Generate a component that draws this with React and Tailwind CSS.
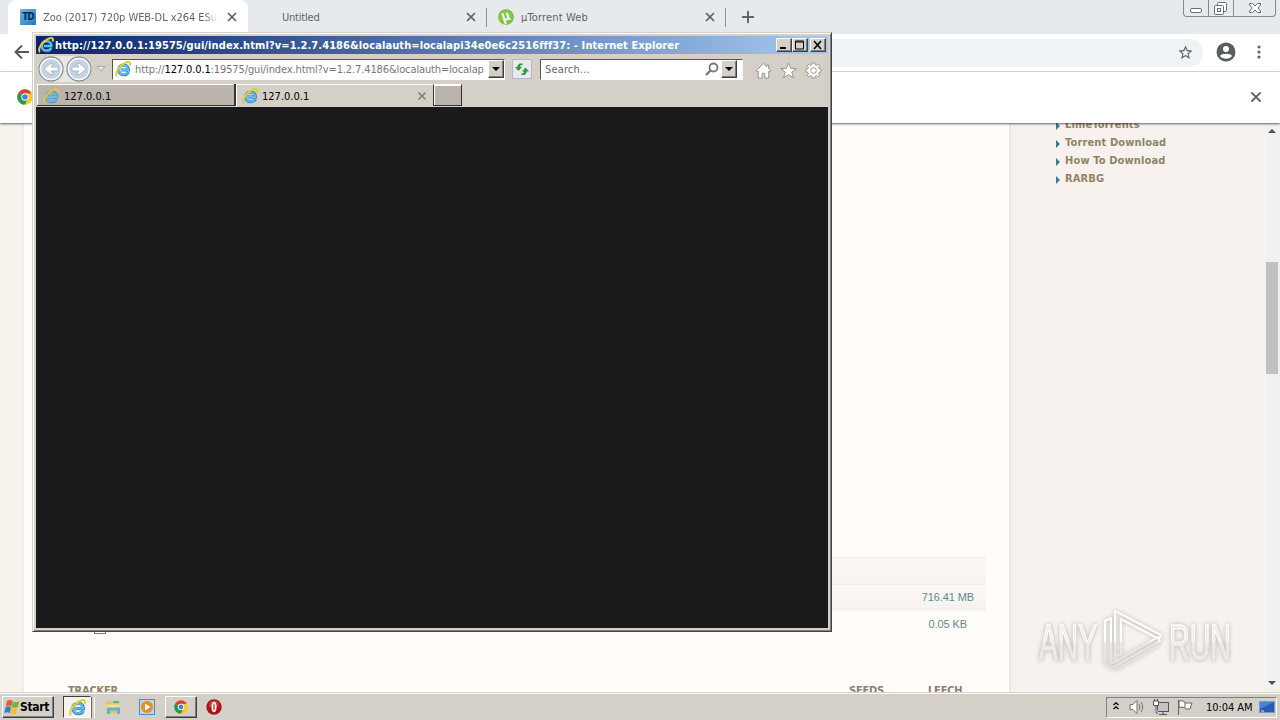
import { X, Plus } from 'lucide-react';
import clsx from 'clsx';

const sidebarLinks = ['LimeTorrents', 'Torrent Download', 'How To Download', 'RARBG'];

function IeLogo({ className }) {
  return (
    <svg viewBox="0 0 16 16" className={clsx('shrink-0', className)}>
      <path d="M13.400 11c-.9 1.800-2.600 2.800-4.700 2.800-3 0-5-2.100-5-4.900S5.700 4 8.700 4c3 0 4.900 2.100 4.800 5.100H6" fill="none" stroke="#2a80c4" strokeWidth="3" />
      <path d="M13.200 10.900c-.8 1.600-2.400 2.600-4.500 2.600-2.800 0-4.700-1.900-4.700-4.600s1.900-4.600 4.700-4.600 4.600 1.900 4.500 4.700H6" fill="none" stroke="#5fbcee" strokeWidth="1.900" />
      <path d="M2 15.100C.2 13.800 1.200 9.800 4.500 6.100 8.100 2.200 12.700.1 14.500 1.400c.8.7.7 1.900.1 3.100" fill="none" stroke="#e8cb2c" strokeWidth="2" />
    </svg>
  );
}

function ChromeLogo({ className }) {
  return (
    <svg viewBox="0 0 16 16" className={clsx('shrink-0', className)}>
      <circle cx="8" cy="8" r="7.800" fill="#fbc91c" />
      <path d="M8 8 1.300 4.100A7.800 7.800 0 0 1 14.700 4.200L8 4.500z" fill="#dd4335" />
      <path d="M1.300 4.100A7.800 7.800 0 0 0 7.700 15.800L11 9.800 8 8z" fill="#21995a" />
      <circle cx="8" cy="8" r="3.700" fill="#fff" />
      <circle cx="8" cy="8" r="2.800" fill="#4285d8" />
    </svg>
  );
}

function UTorrentLogo() {
  return (
    <svg viewBox="0 0 16 16" className="h-4 w-4 shrink-0">
      <circle cx="8" cy="8" r="7.800" fill="#6fb83a" />
      <circle cx="8" cy="8" r="6.800" fill="#86ca4c" />
      <path d="M4.300 4.200 6 9.300c.6 1.800 2.700 1.500 3.500.3M8.700 3.700l1.700 5c.3 1 1 1.400 2 .9M6 9.500l1.800 5.500" fill="none" stroke="#fff" strokeWidth="2" />
    </svg>
  );
}

function ChromeTabStrip() {
  return (
    <div className="flex h-[34px] bg-[#e6eaed] pl-2">
      <div className="flex h-[34px] w-[240px] items-center rounded-t-lg bg-white pl-3 pr-[9px]">
        <div className="flex h-4 w-4 shrink-0 items-center justify-center bg-linear-to-br from-[#62bbec] to-[#2779b9] text-[10px] font-bold tracking-[-1px] text-[#062e50]">
          TD
        </div>
        <div className="ml-[7px] mt-px w-[175px] overflow-hidden whitespace-nowrap mask-r-from-92% tracking-[-0.06px] text-[#606367]">
          Zoo (2017) 720p WEB-DL x264 ESub
        </div>
        <X className="ml-auto h-3.5 w-3.5 shrink-0 text-[#5f6368]" strokeWidth={3} />
      </div>
      <div className="flex w-[239px] items-center justify-between pl-[34px] pr-[9px] text-[#606367]">
        <span className="mt-px tracking-[-0.2px]">Untitled</span>
        <X className="h-3.5 w-3.5 text-[#5f6368]" strokeWidth={3} />
      </div>
      <div className="-ml-px my-auto h-[19px] w-px bg-[#8f9397]" />
      <div className="flex w-[237px] items-center pl-[11px] pr-[7px] text-[#606367]">
        <UTorrentLogo />
        <span className="ml-[7px] mt-px tracking-[0.15px]">µTorrent Web</span>
        <X className="ml-auto h-3.5 w-3.5 text-[#5f6368]" strokeWidth={3} />
      </div>
      <div className="my-auto ml-px h-[19px] w-px bg-[#8f9397]" />
      <Plus className="ml-[13px] mt-2 h-[18px] w-[18px] text-[#5f6368]" strokeWidth={2.600} />
      <div className="ml-auto mr-1 flex h-[17px] w-[93px] rounded-b border border-t-0 border-[#85898d]">
        <svg className="h-4 w-full" viewBox="0 0 91 16" fill="none" stroke="#6b6f75">
          <path d="M24.500 0V16M49.500 0V16" stroke="#85898d" />
          <rect x="6.500" y="8.500" width="11" height="4" rx="1.500" fill="#fff" />
          <rect x="33.500" y="2.500" width="9" height="9" rx="1" fill="#fff" />
          <rect x="30.500" y="5.500" width="9" height="9" rx="1" fill="#fff" />
          <rect x="33.500" y="8.500" width="3" height="3" />
          <path d="M65.500 3.500h3l2.500 2.500 2.500-2.500h3v1.500l-2.500 3 2.500 3v1.500h-3L71 10l-2.500 2.500h-3V11L68 8l-2.500-3z" fill="#fff" />
        </svg>
      </div>
    </div>
  );
}

function ChromeToolbar() {
  return (
    <>
      <div className="flex h-[38px] items-center border-b border-[#d9dbdd] bg-white">
        <svg viewBox="0 0 16 16" className="ml-3.5 mb-0.5 h-4 w-4" fill="none" stroke="#55585c" strokeWidth="1.900">
          <path d="M15 8H2M8 1.500 1.500 8 8 14.500" />
        </svg>
        <div className="ml-20 flex h-7 flex-1 items-center justify-end rounded-r-full bg-[#eff3f6] pr-[9px]">
          <svg viewBox="0 0 24 24" className="h-[17px] w-[17px]" fill="#5f6368">
            <path d="m22 9.240-7.190-.62L12 2 9.190 8.630 2 9.240l5.460 4.730L5.820 21 12 17.270 18.180 21l-1.630-7.030zM12 15.400l-3.760 2.270 1-4.280-3.320-2.880 4.380-.38L12 6.100l1.710 4.040 4.380.38-3.320 2.880 1 4.280z" />
          </svg>
        </div>
        <svg viewBox="0 0 20 20" className="mb-0.5 ml-[13px] h-5 w-5">
          <circle cx="10" cy="10" r="9.500" fill="#595c60" />
          <circle cx="10" cy="7" r="3" fill="#fff" />
          <path d="M4 14c1-3 11-3 12 0-2.500 3.700-9.500 3.700-12 0z" fill="#fff" />
        </svg>
        <svg viewBox="0 0 4 14" className="ml-[21px] mb-px mr-[19px] h-3.5 w-1" fill="#5f6368">
          <circle cx="2" cy="2" r="1.600" />
          <circle cx="2" cy="7" r="1.600" />
          <circle cx="2" cy="12" r="1.600" />
        </svg>
      </div>
      <div className="relative z-10 flex h-[51px] items-center justify-between bg-white pb-px pl-[17px] pr-4 shadow-[0_1px_2px_#0009]">
        <ChromeLogo className="h-4 w-4" />
        <X className="h-4 w-4 text-[#67696c]" strokeWidth={3} />
      </div>
    </>
  );
}

function TorrentPage() {
  return (
    <div className="flex h-[569px] overflow-hidden bg-[#f7f2ee]">
      <div className="w-6 border-r-2 border-[#f0ece6] bg-[#f6f3ed]" />
      <main className="w-[987px] shrink-0 border-r-2 border-[#eee8e4] bg-[#fffcfa] pl-11 pr-[23px] pt-[434px] font-['Liberation_Sans'] text-[11px] text-[#5f8a91]">
        <div className="h-[28px] border-y border-[#efebe7] bg-linear-to-b from-[#fbf8f6] to-[#f6f3f0]" />
        <div className="flex h-[26px] items-center justify-end bg-linear-to-b from-[#fbf8f6] to-[#f5f2ef] pb-0.5 pr-3 tracking-[-0.1px]">
          716.41 MB
        </div>
        <div className="flex h-[26px] items-center justify-between pl-[26px] pr-[19px]">
          <div className="mt-[7px] h-3 w-3 border border-[#5b7f95]" />
          <span className="tracking-[-0.1px]">0.05 KB</span>
        </div>
        <div className="flex pt-[47px] font-[DejaVu_Sans_Condensed] font-bold leading-[14px] tracking-[-0.2px] text-[#8e8064]">
          <span className="w-[781px]">TRACKER</span>
          <span className="w-[79px]">SEEDS</span>
          <span>LEECH</span>
        </div>
      </main>
      <aside className="w-[255px] shrink-0 pl-[45px]">
        <ul className="-mt-[7px] font-bold tracking-[0.15px] text-[#8f8465]">
          {sidebarLinks.map((link) => (
            <li key={link} className="flex h-[18px] items-center">
              <span className="mr-[5px] mt-px h-0 w-0 border-y-4 border-l-4 border-y-transparent border-l-[#387b8c]" />
              {link}
            </li>
          ))}
        </ul>
      </aside>
      <div className="flex w-3.5 flex-col items-start bg-[#f1f1f1]">
        <div className="ml-0.5 mt-1.5 border-x-4 border-b-4 border-x-transparent border-b-[#505050]" />
        <div className="mt-[129px] h-[112px] w-3 bg-[#c1c1c1]" />
        <div className="ml-0.5 mt-[307px] border-x-4 border-t-4 border-x-transparent border-t-[#505050]" />
      </div>
    </div>
  );
}

function CaptionButton({ children }) {
  return (
    <div className="flex h-[14px] w-4 items-center justify-center border border-b-[#404040] border-l-white border-r-[#404040] border-t-white bg-[#d4d0c8] shadow-[inset_-1px_-1px_#808080]">
      <svg viewBox="0 0 12 10" className="h-2.5 w-3" fill="none" stroke="#000">
        {children}
      </svg>
    </div>
  );
}

function DropButton() {
  return (
    <div className="flex h-[18px] w-4 shrink-0 items-center justify-center border border-b-[#404040] border-l-white border-r-[#404040] border-t-white bg-[#d4d0c8] shadow-[inset_-1px_-1px_#808080]">
      <div className="border-x-4 border-t-4 border-x-transparent border-t-black" />
    </div>
  );
}

function NavButton({ back }) {
  return (
    <svg viewBox="0 0 26 26" className="h-[26px] w-[26px]">
      <circle cx="13" cy="13" r="12" fill="#e6edf2" stroke="#8b8f93" strokeWidth="1.300" />
      <circle cx="13" cy="13" r="10.500" fill="#c3d4e0" stroke="#f2f7fa" strokeWidth="1.500" />
      <path
        d={back ? 'M20 11h-7l2.500-3.300h-3.300L6 13l6.200 5.300h3.300L13 15h7z' : 'M6 11h7l-2.500-3.300h3.300L20 13l-6.200 5.300h-3.300L13 15H6z'}
        fill="#fff"
        stroke="#94adbf"
        strokeWidth=".7"
      />
    </svg>
  );
}

function IeWindow() {
  return (
    <div className="absolute left-8 top-8 z-20 flex h-[600px] w-[800px] flex-col border border-b-[#404040] border-l-[#d4d0c8] border-r-[#404040] border-t-[#d4d0c8] bg-[#d4d0c8] p-[3px] shadow-[inset_1px_1px_#fff,inset_-1px_-1px_#808080]">
      <div className="flex h-[18px] shrink-0 items-center bg-linear-to-r from-[#0a246a] to-[#a6caf0] pl-0.5 pr-0.5">
        <IeLogo className="h-4 w-4" />
        <span className="ml-px mt-px whitespace-nowrap font-bold tracking-[0.095px] text-white">
          http://127.0.0.1:19575/gui/index.html?v=1.2.7.4186&amp;localauth=localapi34e0e6c2516fff37: - Internet Explorer
        </span>
        <div className="ml-auto flex">
          <CaptionButton>
            <path d="M2 8h6" strokeWidth="2" />
          </CaptionButton>
          <CaptionButton>
            <path d="M1.500 1v8h8V1zM1 2h9" />
          </CaptionButton>
          <div className="w-0.5" />
          <CaptionButton>
            <path d="m2 1 7 8M9 1 2 9" strokeWidth="1.600" />
          </CaptionButton>
        </div>
      </div>

      <div className="flex h-[30px] shrink-0 items-center pl-0.5">
        <div className="flex gap-0.5 rounded-full bg-[#e9e7e4]">
          <NavButton back />
          <NavButton />
        </div>
        <svg viewBox="0 0 10 6" className="ml-1 h-1.5 w-2.5" fill="#eeeae6" stroke="#aaa69f">
          <path d="M1 .5h8L5 5z" />
        </svg>
        <div className="ml-1.5 flex h-[21px] w-[393px] items-center border border-b-white border-l-[#555] border-r-white border-t-[#555] bg-white pl-0.5">
          <IeLogo className="h-4 w-4" />
          <span className="ml-1 mt-0.5 w-[353px] overflow-hidden whitespace-nowrap tracking-[-0.12px] text-[#777]">
            http://<span className="text-black">127.0.0.1</span>:19575/gui/index.html?v=1.2.7.4186&amp;localauth=localap
          </span>
          <DropButton />
        </div>
        <div className="ml-[7px] flex h-5 w-5 items-center justify-center border border-[#b5b8c3] bg-[#e8eaf0]">
          <svg viewBox="0 0 16 16" className="h-4 w-4 shrink-0" fill="#32953c">
            <path d="M5.500 2.500h3v1.800H6.300v1.700H8L4.500 10 1 6h2.500V4.500z" />
            <path d="M10.500 14h-3v-1.800h2.200V10.500H8L11.500 6.500 15 10.500h-2.500V12z" />
          </svg>
        </div>
        <div className="ml-2 flex h-[21px] w-[203px] items-center border border-b-white border-l-[#555] border-r-white border-t-[#555] bg-white pl-1 pr-[5px]">
          <span className="mt-0.5 tracking-[0.15px] text-[#666]">Search...</span>
          <svg viewBox="0 0 14 14" className="ml-auto mr-0.5 h-3.5 w-3.5" fill="none" stroke="#777" strokeWidth="1.800">
            <circle cx="8.500" cy="5.500" r="4" />
            <path d="m5.500 8.500-4.500 4.500" strokeWidth="2.300" />
          </svg>
          <DropButton />
        </div>
        <div className="ml-3 mt-[3px] flex gap-2">
          <svg viewBox="0 0 18 18" className="h-[17px] w-[17px]" fill="#fff" stroke="#96928b">
            <path d="m9 1.500-8 8 1.500 1.200 1-1V17h4v-5h3v5h4V9.700l1 1L17 9.500l-2.500-2.400V3h-2v2z" />
          </svg>
          <svg viewBox="0 0 18 18" className="h-[17px] w-[17px]" fill="#fff" stroke="#96928b">
            <path d="m9 1 2.200 5.700 6 .3-4.700 3.700 1.700 6.100L9 13.300l-5.200 3.500 1.700-6.100L.8 7l6-.3z" />
          </svg>
          <svg viewBox="0 0 18 18" className="h-[17px] w-[17px]" fill="#fff" stroke="#96928b">
            <path d="m7.500 1-.4 2-1.300.6L4 2.400 2.400 4l1.200 1.800L3 7.100l-2 .4v3l2 .4.6 1.300L2.400 14 4 15.600l1.800-1.200 1.300.6.4 2h3l.4-2 1.300-.6 1.800 1.200 1.600-1.600-1.200-1.800.6-1.300 2-.4v-3l-2-.4-.6-1.300L15.600 4 14 2.400l-1.800 1.200-1.300-.6-.4-2z" />
            <circle cx="9" cy="9" r="3" />
          </svg>
        </div>
      </div>

      <div className="flex h-[23px] shrink-0 pl-px">
        <div className="flex h-[22px] w-[199px] items-center border-b border-r-2 border-[#333] bg-[#bab4ac] pl-1.5 shadow-[inset_1px_1px_#fff]">
          <IeLogo className="mt-0.5 h-4 w-4 opacity-80" />
          <span className="ml-[5px] mt-1">127.0.0.1</span>
        </div>
        <div className="flex h-[23px] w-[197px] items-center border-l border-t border-white pl-[5px] pr-[5px]">
          <IeLogo className="h-4 w-4" />
          <span className="ml-1 mt-px">127.0.0.1</span>
          <X className="ml-auto h-3 w-3 text-[#85817b]" strokeWidth={3.500} />
        </div>
        <div className="h-[22px] w-[29px] border border-b-[#333] border-l-[#333] border-r-[#333] border-t-white bg-[#bab4ac] shadow-[inset_1px_1px_#fff]" />
      </div>

      <div className="flex-1 bg-[#1a1a1a]" />
    </div>
  );
}

function Taskbar() {
  return (
    <div className="absolute bottom-0 left-0 z-30 flex h-7 w-full items-center border-t border-[#d4d0c8] bg-[#d4d0c8] pl-0.5 pt-px shadow-[inset_0_1px_#fff]">
      <div className="flex h-[22px] w-[52px] items-center border border-b-[#404040] border-l-white border-r-[#404040] border-t-white pl-px shadow-[inset_-1px_-1px_#808080]">
        <svg viewBox="0 0 16 16" className="h-4 w-4 shrink-0">
          <path d="M3 2q3-2 5.500 0L7.300 7.500q-2.500-2-5.500 0z" fill="#e65b26" />
          <path d="M8.800 2.300q3.500 2 6.500-.3l-1.500 6q-3 1.500-6 0z" fill="#75b43c" />
          <path d="M1.500 8.300q3-2 5.500 0l-1.300 5.900q-2.500-2-5.500 0z" fill="#377dcc" />
          <path d="M7.500 8.700q3 1.800 6 .3L12 14.700q-3 1.500-6 0z" fill="#f6bf28" />
        </svg>
        <span className="text-[12px] font-bold tracking-[-0.35px]">Start</span>
      </div>
      <div className="ml-[9px] flex h-[22px] w-7 items-center justify-center border border-b-white border-l-[#404040] border-r-white border-t-[#404040] bg-[#f4f2ef]">
        <IeLogo className="h-[17px] w-[17px]" />
      </div>
      <div className="h-[21px] w-1 border-x border-l-[#666] border-r-white" />
      <svg viewBox="0 0 16 16" className="ml-2.5 h-4 w-4">
        <path d="M1 2h5l1 1.500h7V14H1z" fill="#e3c45e" />
        <path d="M1.500 5.500h13V11h-13z" fill="#f2df8f" />
        <path d="M2 15V8.500h13V15h-3v-3.500H5V15z" fill="#5fb0dc" />
        <path d="M8 3h6" stroke="#4caa63" strokeWidth="1.500" />
      </svg>
      <svg viewBox="0 0 16 16" className="ml-[18px] h-4 w-4">
        <rect x=".5" y=".5" width="15" height="15" fill="#b5d8f0" stroke="#4b8fc4" />
        <circle cx="8" cy="8" r="6" fill="#f28a17" />
        <path d="m6 4.500 5.500 3.500L6 11.500z" fill="#fff" />
      </svg>
      <div className="ml-2.5 flex h-[22px] w-8 items-center justify-center border border-b-[#404040] border-l-white border-r-[#404040] border-t-white shadow-[inset_-1px_-1px_#808080]">
        <ChromeLogo className="h-3.5 w-3.5" />
      </div>
      <svg viewBox="0 0 16 16" className="ml-[9px] h-4 w-4">
        <circle cx="8" cy="8" r="7.700" fill="#a81519" />
        <path d="M3 4q5-5 10 0l-1 4H3z" fill="#cf3936" />
        <ellipse cx="8" cy="8" rx="2.500" ry="5.200" fill="#fff" />
        <ellipse cx="8" cy="8" rx=".7" ry="3.800" fill="#c43131" />
      </svg>
      <div className="ml-auto mr-[3px] flex h-[21px] w-[171px] items-center border border-b-white border-l-[#808080] border-r-white border-t-[#808080] pl-1.5">
        <svg viewBox="0 0 6 8" className="mb-0.5 h-2 w-1.5" fill="none" stroke="#000" strokeWidth="1.300">
          <path d="M.5 3 3 .8 5.500 3M.5 7 3 4.800 5.500 7" />
        </svg>
        <svg viewBox="0 0 16 16" className="ml-2.5 h-4 w-4" fill="#fff" stroke="#727272">
          <path d="M1 5.500h3L8 1.500v13l-4-4H1z" />
          <path d="M10 5q2 3 0 6M12 3q3.500 5 0 10" fill="none" />
        </svg>
        <svg viewBox="0 0 16 16" className="ml-2 h-4 w-4" fill="#c4c4c4" stroke="#555">
          <rect x="4.500" y="3.500" width="11" height="9" />
          <path d="M6 15.500h8M10 13v2" />
          <path d="M.5 2v4.500h5V2zM3 6.500V14h2" fill="#fff" />
          <path d="M1.500 0v2M4.500 0v2" />
        </svg>
        <svg viewBox="0 0 16 16" className="ml-2 h-4 w-4" fill="#fff" stroke="#666">
          <path d="M1.500 1v15M2 2q3-1 6 1v6q-3-1.500-6-.5zM8 4h7l-2 6H8" />
        </svg>
        <span className="ml-[13px] mt-px whitespace-nowrap tracking-[-0.05px]">10:04 AM</span>
        <svg viewBox="0 0 16 13" className="ml-auto mr-px mt-px h-[13px] w-4 shrink-0">
          <rect x=".5" y=".5" width="15" height="11" fill="#245cb7" stroke="#7e99bd" />
          <path d="M1 1h14L1 8z" fill="#4985d6" />
          <path d="M2 10h3" stroke="#d9eafa" />
        </svg>
      </div>
    </div>
  );
}

function Watermark() {
  return (
    <svg
      viewBox="0 0 200 72"
      className="absolute left-[1036px] top-[604px] z-20 h-[72px] w-[200px] font-['Liberation_Sans'] text-[50px] drop-shadow-[0_0_2px_#b5b1ad]"
      fill="#f1ece8"
      stroke="url(#mark)"
      strokeWidth="1.500"
    >
      <defs>
        <linearGradient id="mark" gradientUnits="userSpaceOnUse" x1="0" y1="5" x2="0" y2="68">
          <stop offset=".5" stopColor="#fff" />
          <stop offset=".55" stopColor="#ebe7e4" />
          <stop offset="1" stopColor="#e6e2df" />
        </linearGradient>
      </defs>
      <text x="3" y="56" textLength="58" lengthAdjust="spacingAndGlyphs">ANY</text>
      <text x="133" y="56" textLength="62" lengthAdjust="spacingAndGlyphs">RUN</text>
      <path
        d="M79 50V7l46 24-2 4-38-20v36zM75 14l-6 3v43l7 4 48-27-2-4-47 27zM79 66l44-25"
        fill="none"
        strokeWidth="2"
        strokeLinejoin="round"
      />
    </svg>
  );
}

function App() {
  return (
    <div className="relative h-[720px] w-[1280px] overflow-hidden bg-white font-[DejaVu_Sans_Condensed] text-[11px] leading-4 text-black">
      <ChromeTabStrip />
      <ChromeToolbar />
      <TorrentPage />
      <IeWindow />
      <Watermark />
      <Taskbar />
    </div>
  );
}

export default App;
